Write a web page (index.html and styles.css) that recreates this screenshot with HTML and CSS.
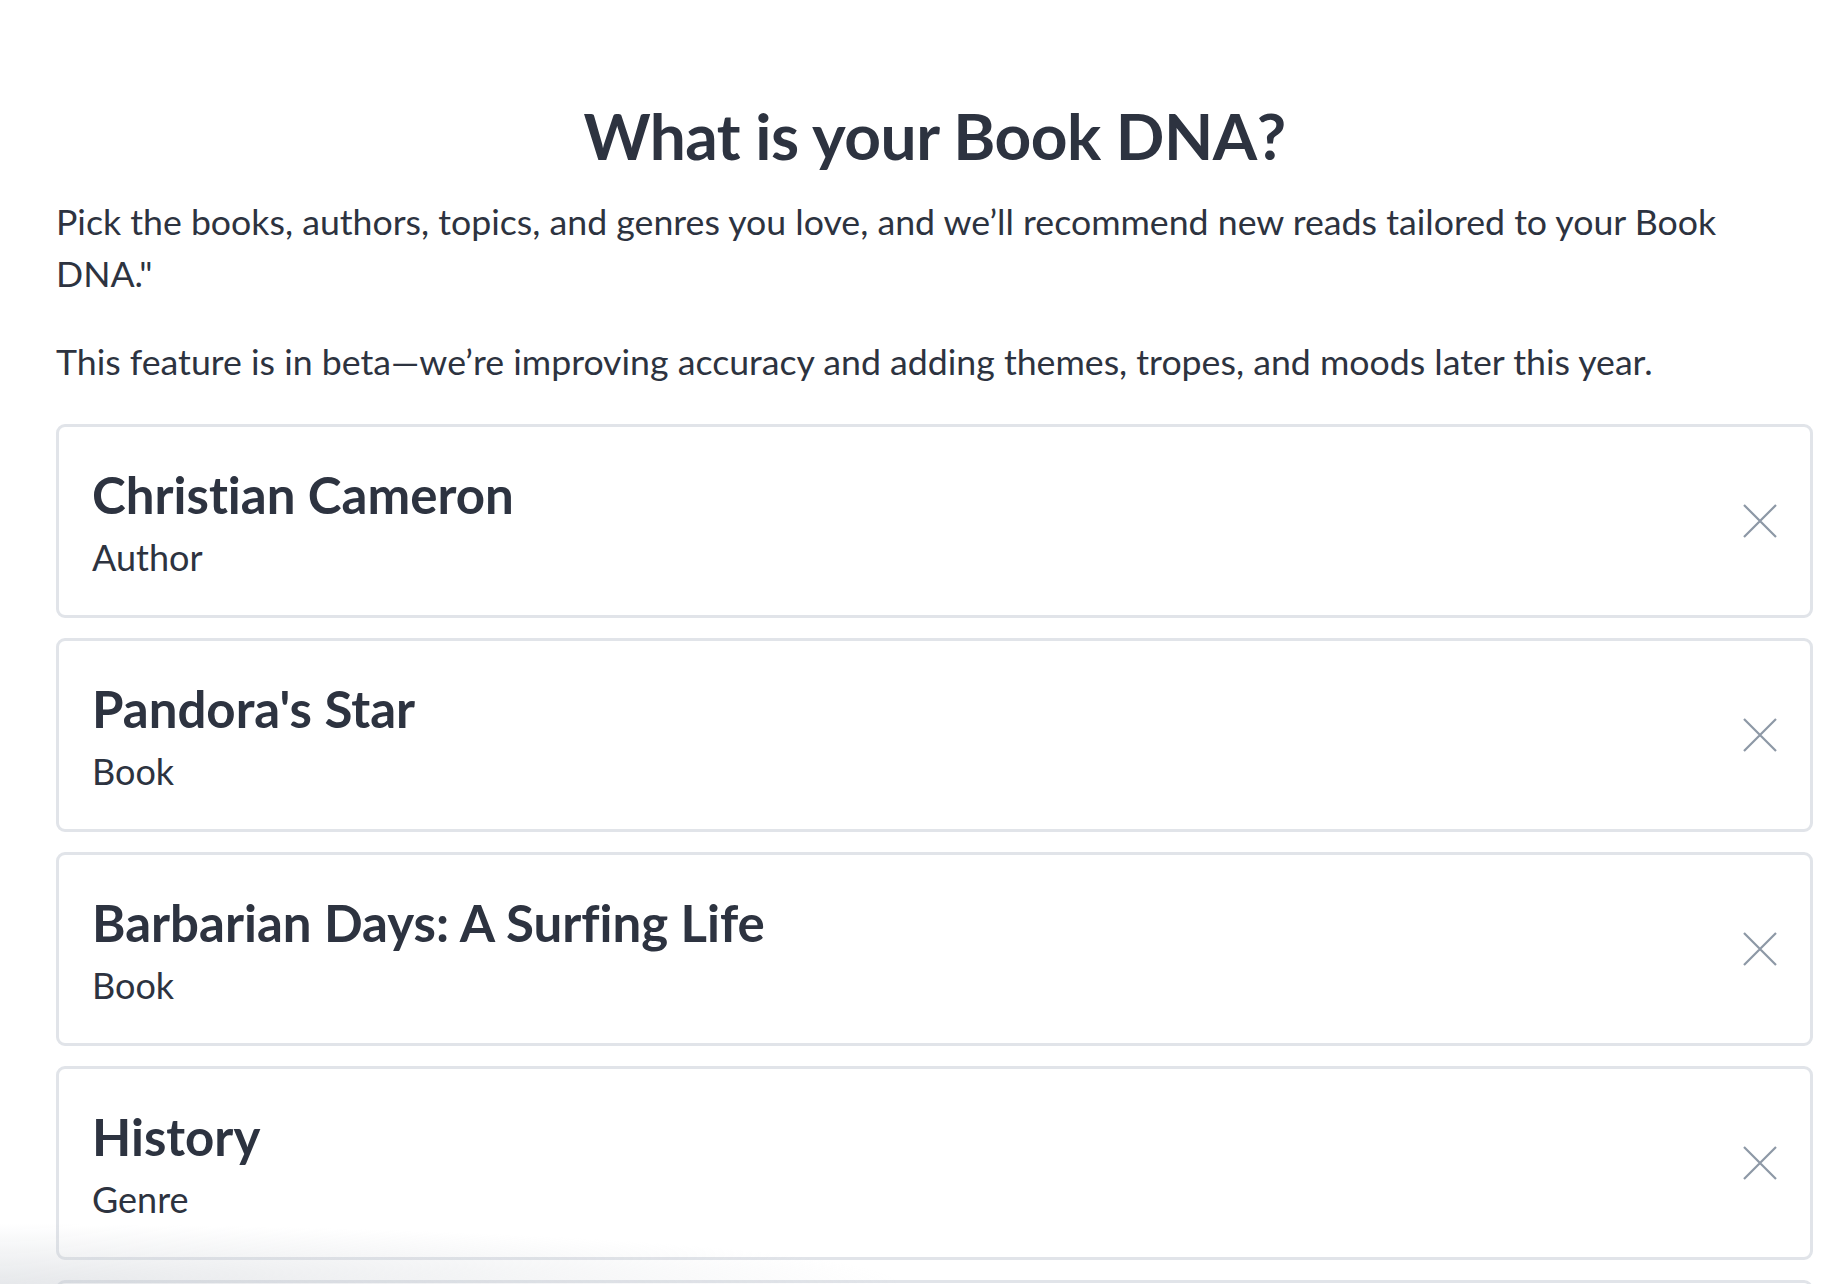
FILE: index.html
```html
<!DOCTYPE html>
<html lang="en">
<head>
<meta charset="utf-8">
<title>What is your Book DNA?</title>
<link rel="stylesheet" href="styles.css">
</head>
<body>
<main class="page">
  <h1 class="title">What is your Book DNA?</h1>
  <p class="lead lead-first">Pick the books, authors, topics, and genres you love, and we’ll recommend new reads tailored to your Book DNA."</p>
  <p class="lead">This feature is in beta—we’re improving accuracy and adding themes, tropes, and moods later this year.</p>
  <ul class="picks">
    <li class="card">
      <div class="card-text">
        <div class="card-title">Christian Cameron</div>
        <div class="card-sub">Author</div>
      </div>
      <button class="remove" aria-label="Remove"><svg viewBox="0 0 34 34" width="34" height="34"><path d="M1 1L33 33M33 1L1 33" /></svg></button>
    </li>
    <li class="card">
      <div class="card-text">
        <div class="card-title">Pandora's Star</div>
        <div class="card-sub">Book</div>
      </div>
      <button class="remove" aria-label="Remove"><svg viewBox="0 0 34 34" width="34" height="34"><path d="M1 1L33 33M33 1L1 33" /></svg></button>
    </li>
    <li class="card">
      <div class="card-text">
        <div class="card-title">Barbarian Days: A Surfing Life</div>
        <div class="card-sub">Book</div>
      </div>
      <button class="remove" aria-label="Remove"><svg viewBox="0 0 34 34" width="34" height="34"><path d="M1 1L33 33M33 1L1 33" /></svg></button>
    </li>
    <li class="card">
      <div class="card-text">
        <div class="card-title">History</div>
        <div class="card-sub">Genre</div>
      </div>
      <button class="remove" aria-label="Remove"><svg viewBox="0 0 34 34" width="34" height="34"><path d="M1 1L33 33M33 1L1 33" /></svg></button>
    </li>
    <li class="card card-peek"></li>
  </ul>
</main>
<div class="fade"></div>
</body>
</html>
```
FILE: styles.css
```css
html, body {
  margin: 0;
  padding: 0;
  background: #ffffff;
}
body {
  font-family: Lato, "Noto Sans", sans-serif;
  color: #2d3340;
  overflow: hidden;
  height: 1284px;
  font-variant-ligatures: none;
  font-feature-settings: "liga" 0, "clig" 0;
}
.page {
  margin-left: 56px;
  width: 1757px;
  padding-top: 94px;
}
.title {
  margin: 0 0 18px;
  text-align: center;
  font-size: 64px;
  font-weight: 700;
  line-height: 84px;
  letter-spacing: -0.5px;
}
.lead {
  margin: 0 0 36px;
  font-size: 35.7px;
  line-height: 52px;
  padding-right: 40px;
}
.picks {
  list-style: none;
  margin: 0;
  padding: 0;
  display: flex;
  flex-direction: column;
  gap: 20px;
}
.card {
  box-sizing: border-box;
  height: 194px;
  border: 3.5px solid #e1e4e9;
  border-radius: 9px;
  display: flex;
  align-items: center;
  justify-content: space-between;
  padding: 0 33px;
}
.card-text {
  align-self: flex-start;
  padding-top: 36.5px;
}
.card-title {
  font-size: 51px;
  font-weight: 700;
  line-height: 62px;
}
.card-sub {
  font-size: 36px;
  line-height: 48px;
  margin-top: 7px;
}
.remove {
  border: 0;
  background: none;
  padding: 0;
  width: 34px;
  height: 34px;
  cursor: pointer;
}
.remove svg {
  display: block;
  fill: none;
  stroke: #8d98a6;
  stroke-width: 2.2;
}
.fade {
  position: fixed;
  left: 0;
  bottom: 0;
  width: 1100px;
  height: 60px;
  background: radial-gradient(ellipse 900px 60px at 0 100%, rgba(200, 204, 210, 0.45), rgba(255, 255, 255, 0) 100%);
  pointer-events: none;
}
```
